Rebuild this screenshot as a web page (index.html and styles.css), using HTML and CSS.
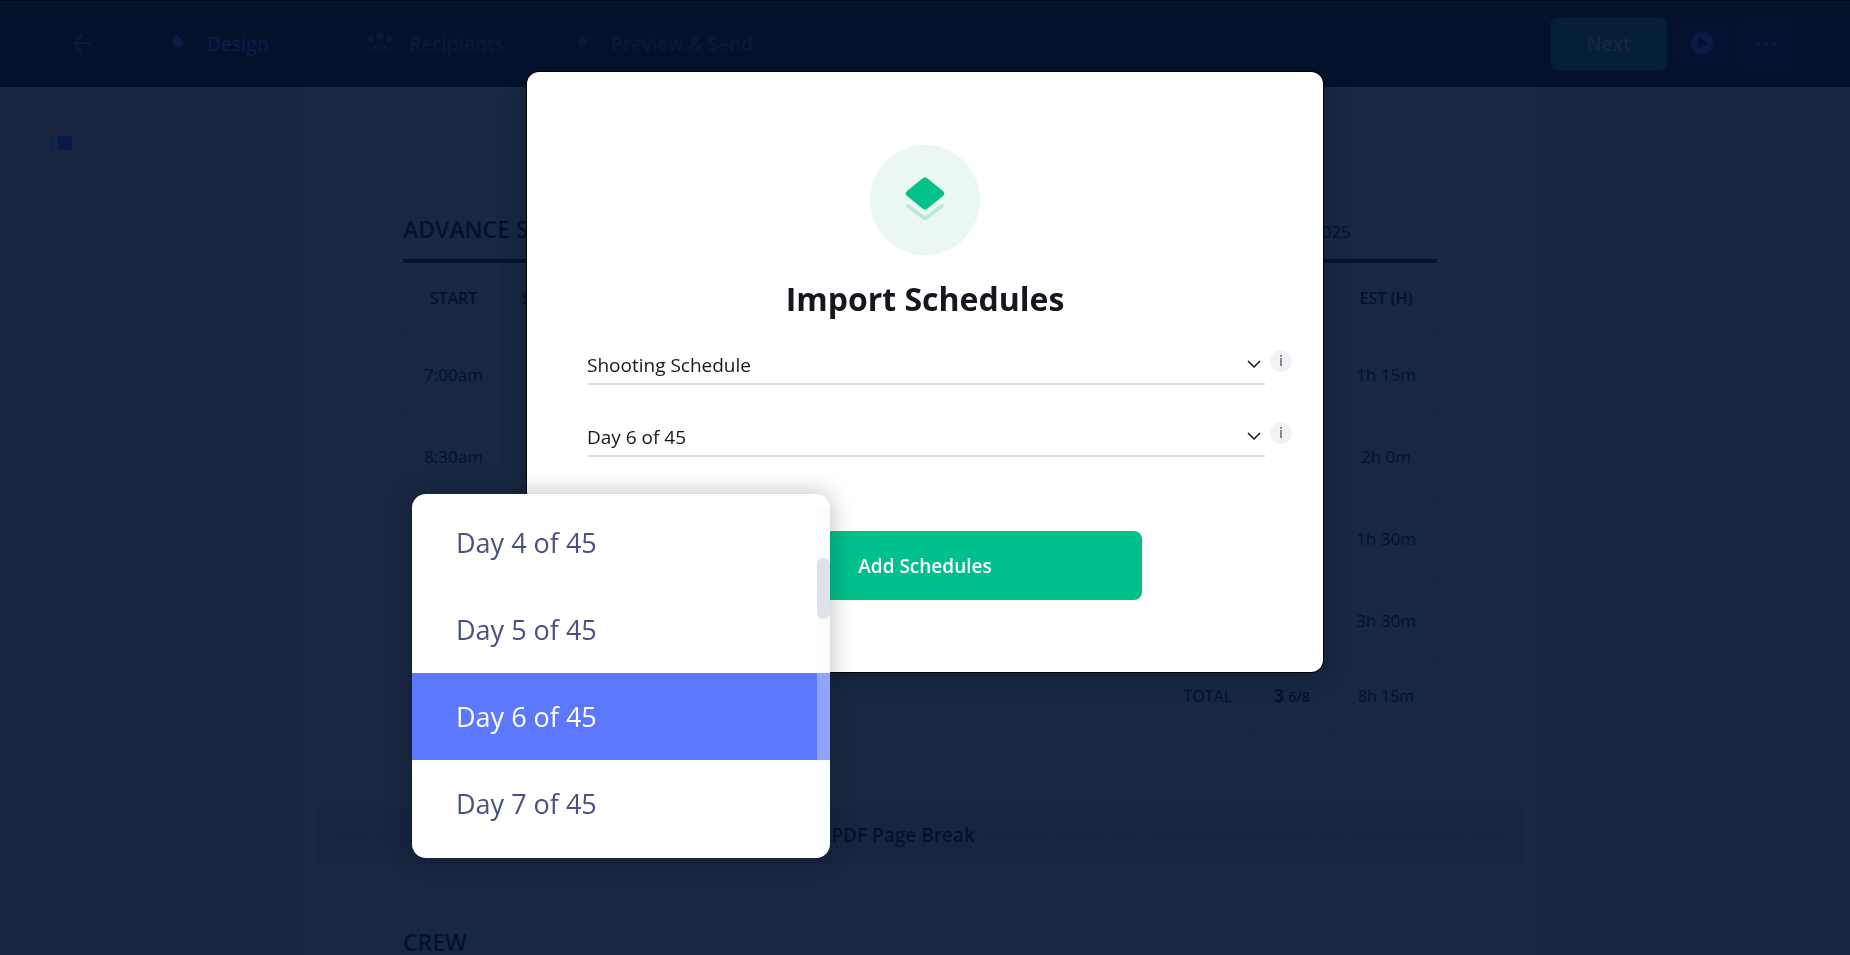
FILE: index.html
```html
<!doctype html>
<html lang="en">
  <head>
    <meta charset="UTF-8" />
    <meta name="viewport" content="width=device-width, initial-scale=1" />

    <title>Import Schedules</title>

    <link rel="stylesheet" href="styles.css">
  </head>
  <body>
    <header class="c-header">
      <button class="c-header__back" type="button" aria-label="Back">
        <svg width="20" height="20" viewBox="0 0 20 20" fill="none" stroke="currentColor" stroke-width="2">
          <path d="M19 9H2M10 0L2 9L10 18" />
        </svg>
      </button>

      <nav class="c-tabs">
        <a class="c-tabs__item c-tabs__item--active" href="#design">
          <svg width="30" height="24" viewBox="0 0 30 24" fill="currentColor">
            <path d="M14 0C16 3 16 5 16.500 7C17.500 6 18 5 18 4C20 8 20 10 20 11A5 5 0 0 1 10 11C10 7 14 5 14 0Z" />
            <path d="M11 18H19V20H11Z" opacity="0.3" />
          </svg>
          Design
        </a>
        <a class="c-tabs__item" href="#recipients">
          <svg width="30" height="24" viewBox="0 0 30 24" fill="currentColor">
            <circle cx="15" cy="4" r="4" />
            <circle cx="6" cy="7" r="3" />
            <circle cx="24" cy="7" r="3" />
            <path d="M6 18C6 9 24 9 24 18ZM0 18C0 15 2 13 5 13L4 18ZM30 18C30 15 28 13 25 13L26 18Z" opacity="0.5" />
          </svg>
          Recipients
        </a>
        <a class="c-tabs__item" href="#preview">
          <svg width="30" height="24" viewBox="0 0 30 24" fill="currentColor">
            <path d="M3 10C9 -1 22 -1 28 10C22 21 9 21 3 10Z" opacity="0.2" />
            <circle cx="15.500" cy="10" r="4.500" />
          </svg>
          Preview &amp; Send
        </a>
      </nav>

      <div class="c-header__actions">
        <button class="c-btn-next" type="button">Next</button>
        <button class="c-btn-icon c-btn-icon--play" type="button" aria-label="Play">
          <svg width="24" height="24" viewBox="0 0 24 24" fill="currentColor">
            <path fill-rule="evenodd" d="M12 0A11 11 0 1 1 12 22A11 11 0 1 1 12 0ZM8 5V17L18 11Z" />
          </svg>
        </button>
        <button class="c-btn-icon c-btn-icon--more" type="button" aria-label="More">
          <svg width="22" height="6" viewBox="0 0 22 6" fill="currentColor">
            <circle cx="3" cy="3" r="2.300" />
            <circle cx="11" cy="3" r="2.300" />
            <circle cx="19" cy="3" r="2.300" />
          </svg>
        </button>
      </div>
    </header>

    <div class="c-workspace">
      <aside class="c-side">
        <button class="c-side__toggle" type="button" aria-label="Toggle panel">
          <svg width="22" height="14" viewBox="0 0 22 14" fill="currentColor">
            <path d="M0 0H5V14H0Z" opacity="0.25" />
            <path d="M8 0H22V14H8Z" />
          </svg>
        </button>
      </aside>

      <main class="c-document">
        <section class="c-section">
          <div class="c-section__head">
            <h2>ADVANCE SCHEDULE</h2>
            <p>2025</p>
          </div>

          <table class="c-schedule">
            <colgroup>
              <col class="c-schedule__col-start" />
              <col />
              <col class="c-schedule__col-pages" />
              <col class="c-schedule__col-est" />
            </colgroup>
            <thead>
              <tr>
                <th>START</th>
                <th class="c-schedule__scene">SCENE</th>
                <th></th>
                <th>EST (H)</th>
              </tr>
            </thead>
            <tbody>
              <tr>
                <td>7:00am</td>
                <td></td>
                <td></td>
                <td>1h 15m</td>
              </tr>
              <tr>
                <td>8:30am</td>
                <td></td>
                <td></td>
                <td>2h 0m</td>
              </tr>
              <tr>
                <td></td>
                <td></td>
                <td></td>
                <td>1h 30m</td>
              </tr>
              <tr>
                <td></td>
                <td></td>
                <td></td>
                <td>3h 30m</td>
              </tr>
            </tbody>
            <tfoot>
              <tr>
                <td class="c-schedule__total" colspan="2">TOTAL</td>
                <td><b>3</b> <small>6/8</small></td>
                <td>8h 15m</td>
              </tr>
            </tfoot>
          </table>
        </section>

        <div class="c-page-break"><span>PDF Page Break</span></div>

        <section class="c-section">
          <h2>CREW</h2>
        </section>
      </main>
    </div>

    <div class="c-overlay">
      <form class="c-modal" role="dialog" aria-labelledby="modal-title">
        <div class="c-modal__icon">
          <svg width="40" height="46" viewBox="0 0 40 46">
            <path d="M3 29L18.500 40.500Q20 41.500 21.500 40.500L37 29" fill="none" stroke="#b9ead6" stroke-width="4" stroke-linecap="round" stroke-linejoin="round" />
            <path d="M17.500 1.500Q20 -0.300 22.500 1.500L38 14Q40.500 16.500 38 19L22.500 31.500Q20 33.300 17.500 31.500L2 19Q-0.500 16.500 2 14Z" fill="#02c18b" />
          </svg>
        </div>

        <h1 id="modal-title">Import Schedules</h1>

        <div class="c-field">
          <select class="c-field__select" aria-label="Schedule type">
            <option>Shooting Schedule</option>
          </select>
          <svg class="c-field__chevron" width="14" height="10" viewBox="0 0 14 10" fill="none" stroke="currentColor" stroke-width="1.500">
            <path d="M1 1L7 7L13 1" />
          </svg>
          <button class="c-info" type="button" aria-label="About schedule type">i</button>
        </div>

        <div class="c-field">
          <select class="c-field__select" aria-label="Shooting day">
            <option>Day 6 of 45</option>
          </select>
          <svg class="c-field__chevron" width="14" height="10" viewBox="0 0 14 10" fill="none" stroke="currentColor" stroke-width="1.500">
            <path d="M1 1L7 7L13 1" />
          </svg>
          <button class="c-info" type="button" aria-label="About shooting day">i</button>

          <div class="c-menu">
            <button class="c-menu__item" type="button">Day 4 of 45</button>
            <button class="c-menu__item" type="button">Day 5 of 45</button>
            <button class="c-menu__item c-menu__item--selected" type="button">Day 6 of 45</button>
            <button class="c-menu__item" type="button">Day 7 of 45</button>
            <div class="c-menu__track"><div class="c-menu__thumb"></div></div>
          </div>
        </div>

        <button class="c-modal__submit" type="submit">Add Schedules</button>
      </form>
    </div>
  </body>
</html>
```

FILE: styles.css
```css
* {
  box-sizing: border-box;
}

body {
  margin: 0;
  height: 100vh;
  overflow: hidden;
  display: flex;
  flex-direction: column;
  font-family: 'Open Sans', sans-serif;
  font-size: 17px;
  color: #03122f;
  background-color: #19253f;
}

h1,
h2,
p {
  margin: 0;
}

button {
  padding: 0;
  border: 0;
  background: none;
  font: inherit;
  color: inherit;
}

svg {
  display: block;
  flex: none;
}

/* Header */

.c-header {
  flex: none;
  display: flex;
  align-items: center;
  height: 87px;
  padding: 0 55px 0 72px;
  background-color: #03112b;
  border-top: 1px solid #000419;
}

.c-header__back {
  margin-right: 71px;
  color: #0c1a35;
}

.c-tabs {
  display: grid;
  grid-template-columns: repeat(3, 202px);
}

.c-tabs__item {
  display: flex;
  align-items: center;
  gap: 14px;
  font-size: 19px;
  font-weight: 600;
  white-space: nowrap;
  text-decoration: none;
  color: #0b1933;
}

.c-tabs__item--active {
  color: #0a1c42;
}

.c-header__actions {
  display: flex;
  align-items: center;
  gap: 9px;
  margin-left: auto;
}

.c-btn-next {
  width: 117px;
  height: 52px;
  border-radius: 8px;
  font-size: 19px;
  font-weight: 600;
  color: #172641;
  background-color: #052036;
}

.c-btn-icon {
  display: grid;
  place-items: center;
  border-radius: 8px;
  color: #091b44;
  background-color: #04122f;
}

.c-btn-icon--play {
  width: 52px;
  height: 46px;
}

.c-btn-icon--more {
  width: 58px;
  height: 52px;
}

/* Document */

.c-workspace {
  flex: 1;
  display: grid;
  grid-template-columns: 1fr minmax(0, 1236px) 1fr;
  min-height: 0;
  padding-right: 10px;
}

.c-side {
  padding: 33px 36px;
}

.c-side__toggle {
  display: grid;
  place-items: center;
  width: 50px;
  height: 46px;
  border-radius: 8px;
  color: #071b44;
  background-color: #182440;
}

.c-document {
  padding: 124px 14px 0;
  background-color: #182840;
}

.c-section {
  padding: 0 87px;
}

h2 {
  font-size: 23px;
  line-height: 36px;
  font-weight: 600;
}

.c-section__head {
  display: flex;
  align-items: baseline;
  justify-content: space-between;
  padding-right: 86px;
  margin-bottom: 12px;
}

.c-schedule {
  width: 100%;
  table-layout: fixed;
  border-collapse: collapse;
  border-top: 4px solid #03122f;
  text-align: center;
}

.c-schedule__col-start {
  width: 100px;
}

.c-schedule__col-pages {
  width: 87px;
}

.c-schedule__col-est {
  width: 101px;
}

.c-schedule th,
.c-schedule td {
  height: 82px;
  padding: 0 16px;
  border: 1px solid #17263f;
  white-space: nowrap;
}

.c-schedule thead th {
  height: 72px;
  padding: 0;
  border-top: 0;
  font-size: 16px;
  font-weight: 600;
}

.c-schedule thead .c-schedule__scene {
  padding: 0 18px;
  text-align: left;
}

.c-schedule tfoot td {
  height: 69px;
  padding: 0 16px;
  font-size: 16px;
}

.c-schedule tfoot .c-schedule__total {
  text-align: right;
}

.c-schedule tfoot b {
  font-size: 17px;
}

.c-schedule tfoot small {
  font-size: 14px;
  font-weight: 600;
}

.c-page-break {
  display: flex;
  align-items: center;
  gap: 8px;
  height: 58px;
  margin: 75px 0 60px;
  font-size: 19px;
  font-weight: 600;
  background-color: #18253f;
}

.c-page-break::before,
.c-page-break::after {
  content: '';
  flex: 15;
  border-top: 2px dashed #142143;
}

.c-page-break::after {
  flex: 16;
}

/* Modal */

.c-overlay {
  position: fixed;
  inset: 0;
  display: flex;
  justify-content: center;
  align-items: flex-start;
  padding-top: 72px;
}

.c-modal {
  display: flex;
  flex-direction: column;
  width: 796px;
  padding: 73px 60px 72px;
  border-radius: 12px;
  color: #16161f;
  background-color: #fff;
  box-shadow: 0 0 0 1px #00030c, 0 4px 24px rgb(10 10 40 / 0.3);
}

.c-modal__icon {
  display: grid;
  place-items: center;
  align-self: center;
  width: 110px;
  height: 110px;
  border-radius: 50%;
  background-color: #ebf7f2;
}

.c-modal h1 {
  margin: 22px 0 23px;
  font-size: 32px;
  line-height: 44px;
  font-weight: 700;
  text-align: center;
}

.c-field {
  position: relative;
  display: flex;
  align-items: center;
  height: 41px;
  margin-right: -29px;
}

.c-field + .c-field {
  margin-top: 31px;
}

.c-field__select {
  flex: 1;
  height: 41px;
  padding: 2px 0 0;
  border: 0;
  border-bottom: 2px solid #dae2e8;
  border-radius: 0;
  appearance: none;
  font: inherit;
  font-size: 19px;
  color: inherit;
  background: none;
}

.c-field__chevron {
  margin-left: -18px;
}

.c-info {
  align-self: flex-start;
  width: 22px;
  height: 22px;
  margin: 6px 0 0 9px;
  border-radius: 50%;
  font-size: 14px;
  line-height: 22px;
  font-weight: 600;
  color: #6a7080;
  background-color: #f1f2f4;
}

.c-modal__submit {
  align-self: center;
  width: 434px;
  height: 69px;
  margin-top: 74px;
  border-radius: 8px;
  font-size: 19px;
  font-weight: 600;
  color: #fff;
  background-color: #00c08b;
}

.c-menu {
  position: absolute;
  top: 78px;
  left: -175px;
  width: 418px;
  padding: 5px 0 11px;
  border-radius: 14px;
  background-color: #fff;
  box-shadow: 0 0 24px rgb(10 10 30 / 0.28);
}

.c-menu__item {
  display: block;
  width: 100%;
  height: 87px;
  padding-left: 44px;
  font-size: 27px;
  text-align: left;
  color: #4a5080;
}

.c-menu__item--selected {
  color: #fff;
  background-color: #5c78ff;
}

.c-menu__track {
  position: absolute;
  top: 12px;
  right: 0;
  bottom: 8px;
  width: 13px;
  padding-top: 52px;
  border-radius: 6px;
  background-color: rgb(240 245 248 / 0.35);
}

.c-menu__thumb {
  height: 61px;
  border-radius: 6px;
  background-color: #e0e2e9;
}
```
